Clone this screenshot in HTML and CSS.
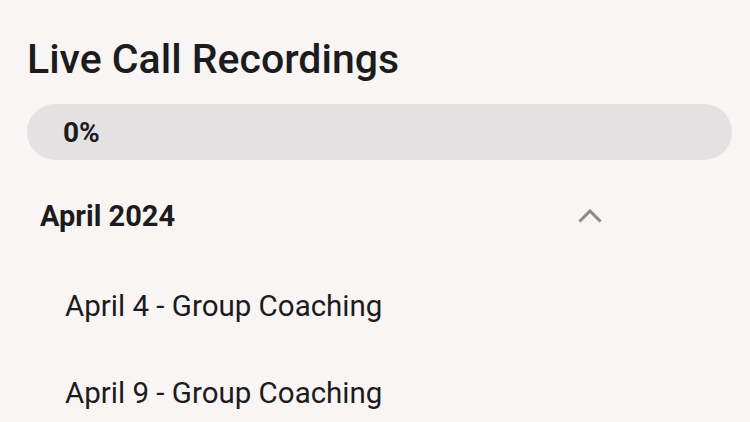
FILE: index.html
```html
<!DOCTYPE html>
<html>
<head>
<meta charset="utf-8">
<link rel="stylesheet" href="styles.css">
</head>
<body>
<main class="page">
  <h1 class="title">Live Call Recordings</h1>
  <div class="progress"><span class="progress-label">0%</span></div>
  <section class="group">
    <div class="group-head">
      <span class="group-title">April 2024</span>
      <svg class="chevron" width="24" height="14" viewBox="0 0 24 14"><polyline points="1.5,12.5 12,2 22.5,12.5" fill="none" stroke="#8a8a8a" stroke-width="3"/></svg>
    </div>
    <ul class="items">
      <li class="item">April 4 - Group Coaching</li>
      <li class="item">April 9 - Group Coaching</li>
    </ul>
  </section>
</main>
</body>
</html>
```

FILE: styles.css
```css
html, body {
  margin: 0;
  padding: 0;
  background: #f8f5f4;
  font-family: Roboto, "Noto Sans", sans-serif;
  color: #1c1b1d;
  overflow: hidden;
}
.page {
  width: 750px;
  height: 422px;
  padding: 35px 18px 0 27px;
  box-sizing: border-box;
}
.title {
  margin: 0;
  font-size: 41px;
  line-height: 48px;
  font-weight: 500;
}
.progress {
  margin-top: 21px;
  height: 56px;
  border-radius: 28px;
  background: #e3e1e2;
  display: flex;
  align-items: center;
  padding-left: 36px;
}
.progress-label {
  font-size: 28px;
  font-weight: 700;
}
.group {
  margin-top: 38px;
}
.group-head {
  display: flex;
  align-items: center;
  justify-content: space-between;
  box-sizing: border-box;
  padding-left: 13px;
  width: 575px;
  height: 36px;
}
.group-title {
  font-size: 29px;
  line-height: 36px;
  font-weight: 700;
}
.items {
  list-style: none;
  margin: 0;
  padding: 54px 0 0 38px;
  display: flex;
  flex-direction: column;
  gap: 51px;
}
.item {
  font-size: 29.5px;
  font-weight: 400;
  line-height: 36px;
}
```
